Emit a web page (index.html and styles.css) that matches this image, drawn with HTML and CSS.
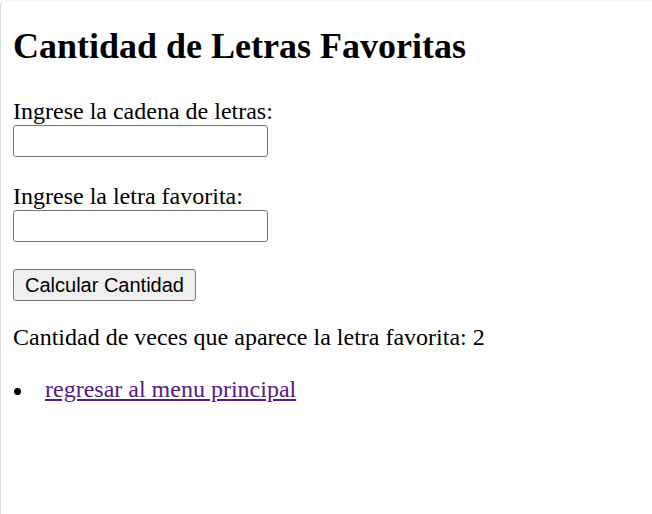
FILE: index.html
```html
<!DOCTYPE html>
<html lang="es">
<head>
<meta charset="utf-8">
<title>Cantidad de Letras Favoritas</title>
<link rel="stylesheet" href="styles.css">
</head>
<body>
<div class="frame">
  <h1 class="title">Cantidad de Letras Favoritas</h1>
  <form class="form">
    <label class="label" for="cadena">Ingrese la cadena de letras:</label>
    <input class="field" type="text" id="cadena">
    <label class="label label-second" for="letra">Ingrese la letra favorita:</label>
    <input class="field" type="text" id="letra">
    <button class="btn" type="button">Calcular Cantidad</button>
  </form>
  <p class="result">Cantidad de veces que aparece la letra favorita: 2</p>
  <ul class="links">
    <li class="links-item"><a class="link" href="#">regresar al menu principal</a></li>
  </ul>
</div>
</body>
</html>
```
FILE: styles.css
```css
html, body {
  margin: 0;
  padding: 0;
  background: #ffffff;
}
body {
  font-family: "Liberation Serif", "Times New Roman", serif;
  color: #000000;
  width: 652px;
  height: 514px;
  overflow: hidden;
}
.frame {
  box-sizing: border-box;
  height: 514px;
  border-left: 1px solid #d9d9d9;
  border-top: 1px solid #f6f6f6;
  border-top-left-radius: 6px;
  padding: 0 0 0 12px;
}
.title {
  font-size: 36px;
  line-height: 41px;
  font-weight: bold;
  margin: 25px 0 0;
}
.form {
  display: flex;
  flex-direction: column;
  align-items: flex-start;
  margin: 31px 0 0;
}
.label {
  display: block;
  font-size: 24px;
  line-height: 27px;
}
.label-second {
  margin-top: 26px;
}
.field {
  box-sizing: border-box;
  width: 255px;
  height: 32px;
  margin: 0;
  border: 1px solid #767676;
  border-radius: 3px;
  background: #ffffff;
  padding: 2px 4px;
  font-size: 20px;
}
.btn {
  box-sizing: border-box;
  margin-top: 27px;
  width: 183px;
  height: 32px;
  padding: 0;
  border: 1px solid #767676;
  border-radius: 3px;
  background: #efefef;
  color: #000000;
  font-family: "Liberation Sans", Arial, sans-serif;
  font-size: 20px;
  line-height: 22px;
  text-align: center;
}
.result {
  font-size: 24px;
  line-height: 27px;
  margin: 23px 0 0;
}
.links {
  font-size: 24px;
  line-height: 27px;
  margin: 25px 0 0;
  padding: 0;
  list-style: none;
}
.links-item {
  display: flex;
  align-items: flex-start;
}
.links-item::before {
  content: "";
  flex: none;
  width: 7px;
  height: 7px;
  margin: 12px 24px 0 1px;
  border-radius: 50%;
  background: #000000;
}
.link {
  color: #551a8b;
  text-decoration: underline;
}
```
